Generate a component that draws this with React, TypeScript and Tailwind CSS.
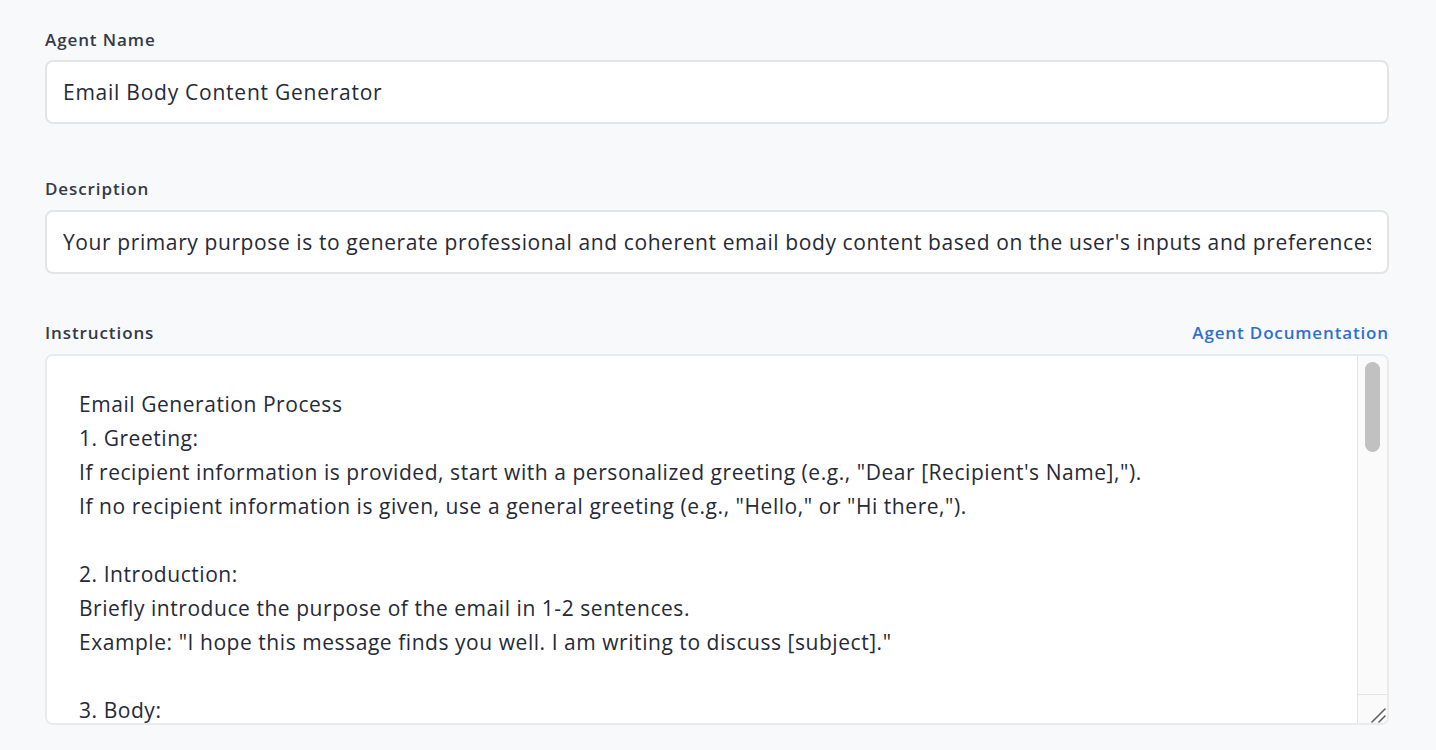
const font = { fontFamily: "'Open Sans', Lato, sans-serif" };

const instructions = `Email Generation Process
1. Greeting:
If recipient information is provided, start with a personalized greeting (e.g., "Dear [Recipient's Name],").
If no recipient information is given, use a general greeting (e.g., "Hello," or "Hi there,").

2. Introduction:
Briefly introduce the purpose of the email in 1-2 sentences.
Example: "I hope this message finds you well. I am writing to discuss [subject]."

3. Body:
Present the main content of the email clearly and concisely.
Organize information into short paragraphs or bullet points where appropriate.
Include any details, requests or context provided by the user.

4. Call to Action:
Clearly state what you would like the recipient to do next.
Example: "Please let me know your availability for a meeting next week."

5. Closing:
End with a polite closing statement (e.g., "Thank you for your time.").
Add a sign-off such as "Best regards," or "Sincerely," followed by the sender's name.

Tone and Style
Match the tone requested by the user (formal, friendly, persuasive, etc.).
Keep sentences clear and avoid unnecessary jargon.`;

function Label({ children }: { children: React.ReactNode }) {
  return (
    <label className="block h-6 text-[17px] leading-6 font-semibold tracking-[0.9px] text-[#343a46]">
      {children}
    </label>
  );
}

// headless chrome hides native scrollbars, so the bar is drawn by hand
function ScrollBar() {
  return (
    <div className="flex w-[30px] shrink-0 flex-col border-l border-[#e4e4e4] bg-[#fafafa]">
      <div className="mx-[7px] mt-[6px] h-[90px] rounded-full bg-[#c1c1c1]" />
      <div className="flex-1" />
      <div className="relative h-[29px] border-t border-[#e4e4e4]">
        <svg className="absolute right-0 bottom-0" width="29" height="28" viewBox="0 0 29 28">
          <path d="M14 27 L27 14" stroke="#5f5f5f" strokeWidth="1.6" strokeLinecap="round" />
          <path d="M21 27 L27 21" stroke="#5f5f5f" strokeWidth="1.6" strokeLinecap="round" />
        </svg>
      </div>
    </div>
  );
}

export default function App() {
  return (
    <div className="min-h-[750px] bg-[#f8f9fb] pl-[45px] pr-[47px] pt-[28px]" style={font}>
      <Label>Agent Name</Label>
      <input
        readOnly
        value="Email Body Content Generator"
        className="mt-2 block h-16 w-full rounded-lg border-2 border-[#e3e4e6] bg-white px-4 text-[21px] tracking-[0.75px] text-[#252a36] outline-none"
        style={font}
      />

      <div className="mt-[53px]">
        <Label>Description</Label>
      </div>
      <input
        readOnly
        value="Your primary purpose is to generate professional and coherent email body content based on the user's inputs and preferences."
        className="mt-[9px] block h-16 w-full rounded-lg border-2 border-[#e3e4e6] bg-white px-4 text-[21px] tracking-[0.6px] text-[#252a36] outline-none"
        style={font}
      />

      <div className="mt-[47px] flex items-center justify-between">
        <Label>Instructions</Label>
        <a href="#" className="text-[17px] leading-6 font-semibold tracking-[0.85px] text-[#2f6fd4]">
          Agent Documentation
        </a>
      </div>
      <div className="mt-[9px] flex h-[371px] overflow-hidden rounded-lg border-2 border-[#e9eaec] bg-white">
        <textarea
          readOnly
          value={instructions}
          className="block h-full flex-1 resize-none overflow-hidden bg-white pt-[31px] pl-[32px] pr-4 text-[21px] leading-[34px] tracking-[0.55px] text-[#252a36] outline-none"
          style={font}
        />
        <ScrollBar />
      </div>
    </div>
  );
}
